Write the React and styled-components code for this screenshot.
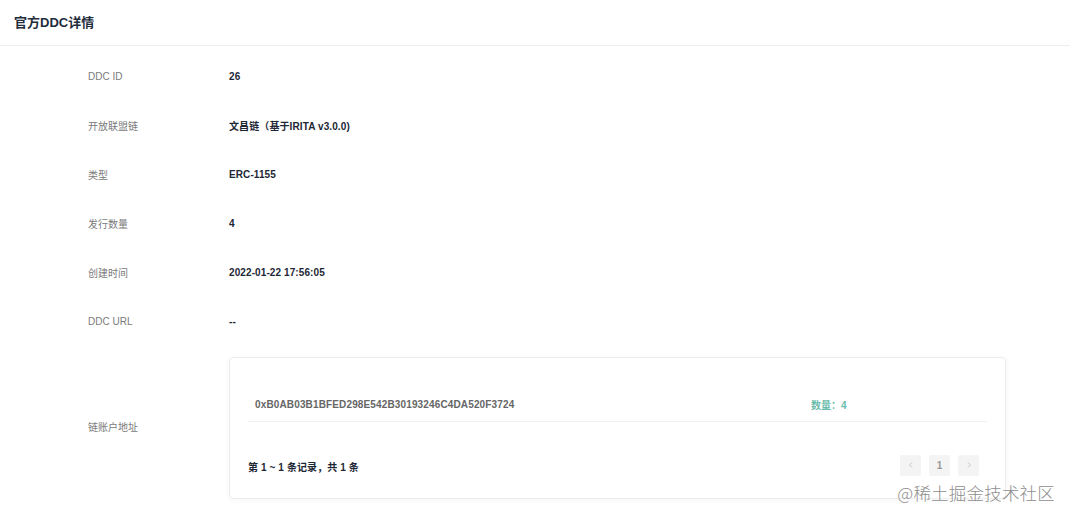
import React from "react";
import styled, { createGlobalStyle } from "styled-components";

const Global = createGlobalStyle`
  html, body { margin: 0; padding: 0; background: #fff; }
  body { font-family: "Liberation Sans", Arial, "Noto Sans CJK SC", sans-serif; }
  * { box-sizing: border-box; }
`;

const Page = styled.div`
  position: relative;
  width: 1070px;
  height: 519px;
  background: #fff;
  overflow: hidden;
`;

const Header = styled.div`
  height: 46px;
  display: flex;
  align-items: center;
  padding: 0 0 2px 14px;
  border-bottom: 1px solid #efefef;
`;

const Title = styled.h1`
  margin: 0;
  font-size: 13px;
  font-weight: 700;
  color: #1f2d3d;
`;

const Body = styled.div`
  padding: 6px 0 0 88px;
`;

const Row = styled.div`
  display: flex;
  align-items: center;
  height: ${(p) => (p.$tall ? "auto" : "49px")};
  margin-top: ${(p) => (p.$tall ? "11px" : "0")};
`;

const Label = styled.div`
  width: 141px;
  flex-shrink: 0;
  font-size: 10px;
  color: #7a7a7a;
  padding-bottom: ${(p) => (p.$lift ? "3px" : "0")};
`;

const Value = styled.div`
  font-size: 10px;
  font-weight: 700;
  color: #1d2735;
  letter-spacing: 0.1px;
`;

const Card = styled.div`
  width: 777px;
  height: 142px;
  border: 1px solid #ececec;
  border-radius: 4px;
  box-shadow: 0 1px 6px rgba(0, 0, 0, 0.04);
  padding: 26px 18px 0 18px;
  background: #fff;
`;

const TableRow = styled.div`
  display: grid;
  grid-template-columns: 556px 1fr;
  align-items: center;
  height: 38px;
  border-bottom: 1px solid #f0f0f0;
  padding: 3px 0 0 7px;
`;

const Address = styled.div`
  font-size: 10px;
  font-weight: 700;
  color: #666;
  letter-spacing: 0.14px;
`;

const Amount = styled.div`
  font-size: 10px;
  font-weight: 700;
  color: #6bbcab;
`;

const Footer = styled.div`
  display: flex;
  align-items: center;
  justify-content: space-between;
  margin-top: 24px;
  height: 38px;
  padding-right: 8px;
`;

const Total = styled.div`
  font-size: 10px;
  font-weight: 700;
  color: #1d2735;
  padding-top: 3px;
  letter-spacing: 0.1px;
`;

const Pager = styled.div`
  display: flex;
  gap: 8px;
`;

const PageBtn = styled.div`
  width: 21px;
  height: 21px;
  border-radius: 2px;
  background: #f4f4f5;
  color: ${(p) => (p.$active ? "#999" : "#c8c8c8")};
  font-size: 10px;
  font-weight: 700;
  display: flex;
  align-items: center;
  justify-content: center;
`;

const Watermark = styled.div`
  position: absolute;
  right: 15px;
  top: 480px;
  font-family: "Noto Sans CJK SC", sans-serif;
  font-size: 17.5px;
  font-weight: 300;
  color: #8e8e8e;
  letter-spacing: 0.2px;
  text-shadow: 0 0 2px #fff;
`;

const Chevron = ({ dir }) => (
  <svg width="8" height="8" viewBox="0 0 8 8" fill="none">
    <path
      d={dir === "left" ? "M5 1.5 L2.5 4 L5 6.5" : "M3 1.5 L5.5 4 L3 6.5"}
      stroke="#c4c4c4"
      strokeWidth="1"
    />
  </svg>
);

const rows = [
  ["DDC ID", "26"],
  ["开放联盟链", "文昌链（基于IRITA v3.0.0)"],
  ["类型", "ERC-1155"],
  ["发行数量", "4"],
  ["创建时间", "2022-01-22 17:56:05"],
  ["DDC URL", "--"],
];

export default function App() {
  return (
    <Page>
      <Global />
      <Header>
        <Title>官方DDC详情</Title>
      </Header>
      <Body>
        {rows.map(([l, v]) => (
          <Row key={l}>
            <Label>{l}</Label>
            <Value>{v}</Value>
          </Row>
        ))}
        <Row $tall>
          <Label $lift>链账户地址</Label>
          <Card>
            <TableRow>
              <Address>0xB0AB03B1BFED298E542B30193246C4DA520F3724</Address>
              <Amount>数量：4</Amount>
            </TableRow>
            <Footer>
              <Total>第 1 ~ 1 条记录，共 1 条</Total>
              <Pager>
                <PageBtn><Chevron dir="left" /></PageBtn>
                <PageBtn $active>1</PageBtn>
                <PageBtn><Chevron dir="right" /></PageBtn>
              </Pager>
            </Footer>
          </Card>
        </Row>
      </Body>
      <Watermark>@稀土掘金技术社区</Watermark>
    </Page>
  );
}
